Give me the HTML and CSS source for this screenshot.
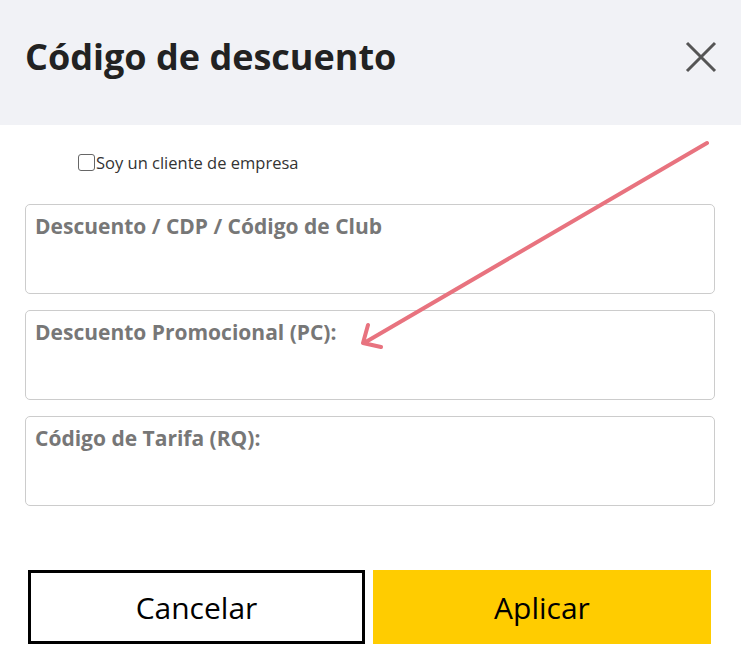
FILE: index.html
```html
<!DOCTYPE html>
<html lang="es">
<head>
<meta charset="utf-8">
<title>Código de descuento</title>
<link rel="stylesheet" href="styles.css">
</head>
<body>
<div class="modal">
  <header class="modal-header">
    <h1 class="modal-title">Código de descuento</h1>
    <button class="close-btn" aria-label="Cerrar">
      <svg width="32" height="32" viewBox="0 0 32 32"><path d="M2 2 L30 30 M30 2 L2 30" stroke="#555" stroke-width="3" fill="none"/></svg>
    </button>
  </header>
  <div class="modal-body">
    <label class="check-row"><span class="checkbox"></span>Soy un cliente de empresa</label>
    <div class="field"><span class="field-label">Descuento / CDP / Código de Club</span></div>
    <div class="field"><span class="field-label">Descuento Promocional (PC):</span></div>
    <div class="field"><span class="field-label">Código de Tarifa (RQ):</span></div>
  </div>
  <footer class="modal-footer">
    <button class="btn btn-cancel">Cancelar</button>
    <button class="btn btn-apply">Aplicar</button>
  </footer>
  <svg class="annot-arrow" width="741" height="669" viewBox="0 0 741 669">
    <path d="M707 143 L364 343 M368 325 L363 343 L381 347" stroke="#e8737f" stroke-width="4" stroke-linecap="round" stroke-linejoin="round" fill="none"/>
  </svg>
</div>
</body>
</html>
```
FILE: styles.css
```css
* { box-sizing: border-box; }
html, body { margin: 0; padding: 0; background: #fff; }
body { font-family: "Open Sans", "Noto Sans", sans-serif; color: #222; }
.modal { position: relative; width: 741px; height: 669px; overflow: hidden; }
.modal-header {
  height: 125px;
  background: #f1f2f6;
  display: flex;
  align-items: center;
  justify-content: space-between;
  padding: 0 24px 12px 25px;
}
.modal-title { margin: 0; font-size: 36px; font-weight: 700; color: #222; letter-spacing: 0; line-height: 1.2; }
.close-btn { background: none; border: 0; padding: 0; width: 32px; height: 32px; display: flex; }
.modal-body { padding: 28px 26px 0 25px; display: flex; flex-direction: column; gap: 16px; }
.check-row {
  display: flex; align-items: center;
  margin-left: 53px;
  font-size: 16.5px; color: #333;
  height: 18px;
  margin-bottom: 17px;
}
.checkbox {
  width: 17px; height: 17px;
  border: 1.5px solid #666; border-radius: 3px;
  background: #fff;
  margin-right: 1px;
}
.field {
  height: 90px;
  border: 1px solid #ccc;
  border-radius: 5px;
  padding: 7px 9px;
}
.field-label { font-size: 21px; font-weight: 700; color: #777; }
.modal-footer { display: flex; gap: 8px; padding: 64px 0 0 28px; }
.btn {
  height: 74px;
  font-family: "Open Sans", sans-serif; font-size: 30px; color: #000;
  border: 0; cursor: pointer; padding: 0;
}
.btn-cancel { width: 337px; background: #fff; border: 3px solid #000; }
.btn-apply { width: 338px; background: #ffcc00; }
.annot-arrow { position: absolute; left: 0; top: 0; pointer-events: none; }
```
